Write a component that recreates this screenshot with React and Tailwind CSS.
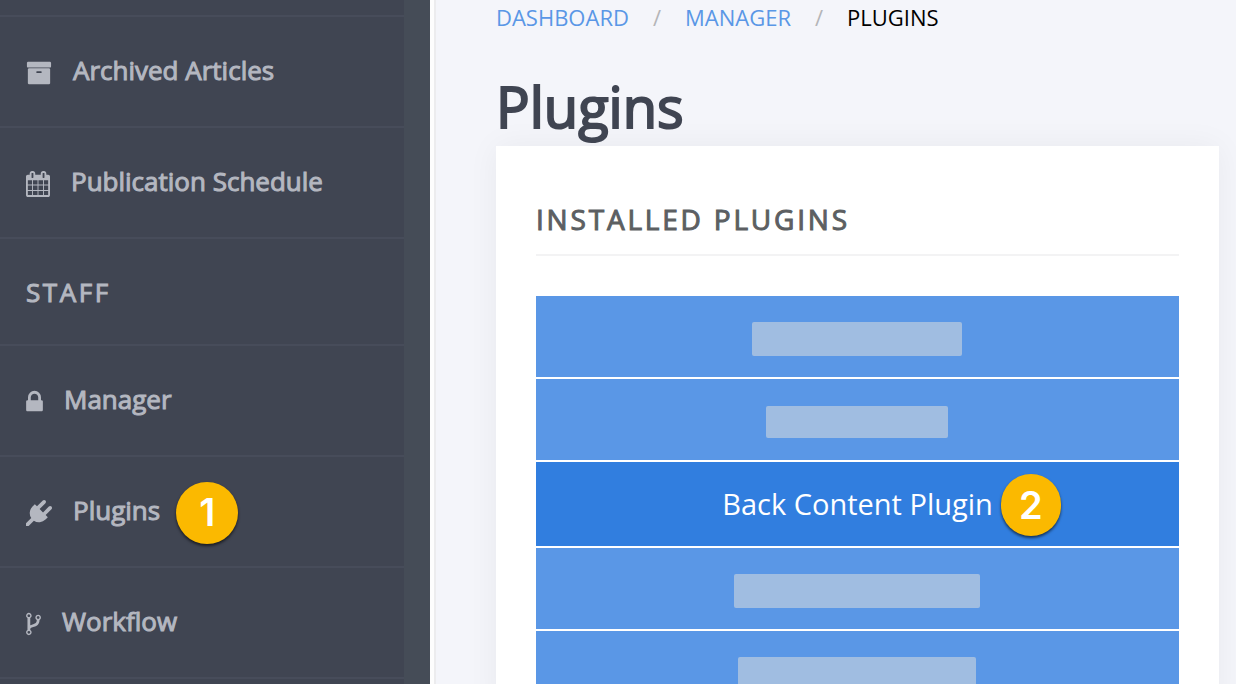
// App.jsx
import React from 'react';

// Icon outlines, drawn on a 1792 unit grid
const icons = {
  archive: {
    viewBox: '0 0 1792 1792',
    size: 'w-[26px]',
    d: 'M1088 832q0-26-19-45t-45-19h-256q-26 0-45 19t-19 45 19 45 45 19h256q26 0 45-19t19-45zm576-192v960q0 26-19 45t-45 19h-1408q-26 0-45-19t-19-45v-960q0-26 19-45t45-19h1408q26 0 45 19t19 45zm64-448v256q0 26-19 45t-45 19h-1536q-26 0-45-19t-19-45v-256q0-26 19-45t45-19h1536q26 0 45 19t19 45z'
  },
  calendar: {
    viewBox: '64 0 1664 1792',
    size: 'w-[24px]',
    d: 'M192 1664h288v-288h-288v288zm352 0h320v-288h-320v288zm-352-352h288v-320h-288v320zm352 0h320v-320h-320v320zm-352-384h288v-288h-288v288zm736 736h320v-288h-320v288zm-384-736h320v-288h-320v288zm768 736h288v-288h-288v288zm-384-352h320v-320h-320v320zm-352-864v-288q0-13-9.500-22.500t-22.500-9.500h-64q-13 0-22.500 9.500t-9.500 22.500v288q0 13 9.500 22.500t22.500 9.500h64q13 0 22.500-9.500t9.500-22.500zm736 864h288v-320h-288v320zm-384-384h320v-288h-320v288zm384 0h288v-288h-288v288zm32-480v-288q0-13-9.500-22.500t-22.500-9.500h-64q-13 0-22.500 9.500t-9.500 22.500v288q0 13 9.500 22.500t22.500 9.500h64q13 0 22.500-9.500t9.500-22.500zm384-64v1280q0 52-38 90t-90 38h-1408q-52 0-90-38t-38-90v-1280q0-52 38-90t90-38h128v-96q0-66 47-113t113-47h64q66 0 113 47t47 113v96h384v-96q0-66 47-113t113-47h64q66 0 113 47t47 113v96h128q52 0 90 38t38 90z'
  },
  lock: {
    viewBox: '320 0 1152 1792',
    size: 'w-[17px]',
    d: 'M640 768h512v-192q0-106-75-181t-181-75-181 75-75 181v192zm832 96v576q0 40-28 68t-68 28h-960q-40 0-68-28t-28-68v-576q0-40 28-68t68-28h32v-192q0-184 132-316t316-132 316 132 132 316v192h32q40 0 68 28t28 68z'
  },
  plug: {
    viewBox: '0 0 1792 1792',
    size: 'w-[26px]',
    d: 'M1755 453q37 38 37 90.500t-37 90.500l-401 400 150 150-160 160q-163 163-389.500 186.500t-411.500-100.500l-362 362h-181v-181l362-362q-124-185-100.500-411.500t186.500-389.500l160-160 150 150 400-401q38-37 91-37t90 37 37 90.500-37 90.500l-400 401 234 234 401-400q38-37 91-37t90 37z'
  },
  fork: {
    viewBox: '384 0 1024 1792',
    size: 'w-[15px]',
    d: 'M672 1472q0-40-28-68t-68-28-68 28-28 68 28 68 68 28 68-28 28-68zm0-1152q0-40-28-68t-68-28-68 28-28 68 28 68 68 28 68-28 28-68zm640 128q0-40-28-68t-68-28-68 28-28 68 28 68 68 28 68-28 28-68zm96 0q0 52-26 96.500t-70 69.500q-2 287-226 414-67 38-203 81-128 40-169.500 71t-41.500 100v26q44 25 70 69.500t26 96.500q0 80-56 136t-136 56-136-56-56-136q0-52 26-96.500t70-69.500v-820q-44-25-70-69.500t-26-96.500q0-80 56-136t136-56 136 56 56 136q0 52-26 96.500t-70 69.500v497q54-26 154-57 55-17 87.500-29.500t70.500-31 59-39.500 40.500-51 28-69.500 8.500-91.500q-44-25-70-69.500t-26-96.500q0-80 56-136t136-56 136 56 56 136z'
  }
};

const Icon = ({ name }) => (
  <svg viewBox={icons[name].viewBox} className={`${icons[name].size} h-[26px] shrink-0 fill-current`} aria-hidden="true">
    <path d={icons[name].d} />
  </svg>
);

// Numbered callout
const Badge = ({ number, className }) => (
  <span
    className={`flex h-[62px] items-center justify-center rounded-full bg-[#fbb900] font-['Inter',sans-serif] text-[38px] font-semibold text-white [-webkit-text-stroke:0] shadow-[0_2px_3px_rgba(0,0,0,0.6)] ${className}`}
  >
    {number}
  </span>
);

const NavItem = ({ icon, label, badge }) => (
  <li className="border-b-2 border-[#474c5a]">
    <a href="#" className="flex h-[109px] items-center gap-[21px] pt-[2px] pl-[26px]">
      <Icon name={icon} />
      <span className="pb-1">{label}</span>
      {badge && <Badge number={badge} className="-ml-[5px] w-[62px]" />}
    </a>
  </li>
);

// Names are hidden for every plugin but one
const plugins = [
  { id: 1, bar: 'w-[210px] h-[34px]' },
  { id: 2, bar: 'w-[182px] h-[32px]' },
  { id: 3, name: 'Back Content Plugin', badge: 2 },
  { id: 4, bar: 'w-[246px] h-[34px]' },
  { id: 5, bar: 'w-[238px] h-[34px]' }
];

const PluginButton = ({ plugin }) => {
  if (plugin.name) {
    return (
      <button type="button" className="flex h-[84px] w-full items-center justify-center bg-[#317edf] text-[29px] text-white">
        <span className="relative">
          {plugin.name}
          <Badge number={plugin.badge} className="absolute -top-2 left-full ml-2 w-[60px]" />
        </span>
      </button>
    );
  }

  return (
    <button type="button" aria-label="Plugin" className="flex h-[81px] w-full items-center justify-center bg-[#5a97e6] pt-1 pr-px">
      <span className={`rounded-xs bg-[#a0bde1] ${plugin.bar}`} />
    </button>
  );
};

const App = () => {
  return (
    <div className="flex h-screen overflow-hidden bg-[#f4f5fa] font-['Open_Sans',sans-serif]">
      {/* Sidebar */}
      <aside className="w-[430px] shrink-0 bg-[#454c57] pr-[26px]">
        <nav className="min-h-full bg-[#404552] text-[26px] text-[#b4b7c0] [-webkit-text-stroke:1px]">
          <div className="h-[17px] border-b-2 border-[#474c5a]" />
          <ul>
            <NavItem icon="archive" label="Archived Articles" />
            <NavItem icon="calendar" label="Publication Schedule" />
            <li className="flex h-[107px] items-center border-b-2 border-[#474c5a] pt-[2px] pl-[26px] tracking-widest">
              STAFF
            </li>
            <NavItem icon="lock" label="Manager" />
            <NavItem icon="plug" label="Plugins" badge={1} />
            <NavItem icon="fork" label="Workflow" />
          </ul>
        </nav>
      </aside>
      <div className="w-[6px] shrink-0 border-r-2 border-[#ececee] bg-[#fdfdfd]" />

      {/* Main content */}
      <main className="min-w-0 grow pr-[17px] pl-[60px]">
        <nav className="flex h-[34px] items-center gap-6 text-[22px] text-[#5a97e6]" aria-label="Breadcrumb">
          <a href="#">DASHBOARD</a>
          <span className="text-[#b5b5b8]">/</span>
          <a href="#">MANAGER</a>
          <span className="text-[#b5b5b8]">/</span>
          <span className="text-black">PLUGINS</span>
        </nav>
        <h1 className="mt-[34px] pb-[2px] text-[56px] leading-[76px] text-[#404552] [-webkit-text-stroke:2px]">Plugins</h1>

        <section className="bg-white px-10 pt-[50px] shadow-[0_0_30px_rgba(0,0,0,0.05)]">
          <h2 className="border-b-2 border-[#f3f3f4] pb-3 text-[28px] leading-[46px] tracking-widest text-[#5c5f62] [-webkit-text-stroke:1px]">
            INSTALLED PLUGINS
          </h2>
          <div className="mt-10 flex flex-col gap-[2px]">
            {plugins.map((plugin) => (
              <PluginButton key={plugin.id} plugin={plugin} />
            ))}
          </div>
        </section>
      </main>
    </div>
  );
};

export default App;
